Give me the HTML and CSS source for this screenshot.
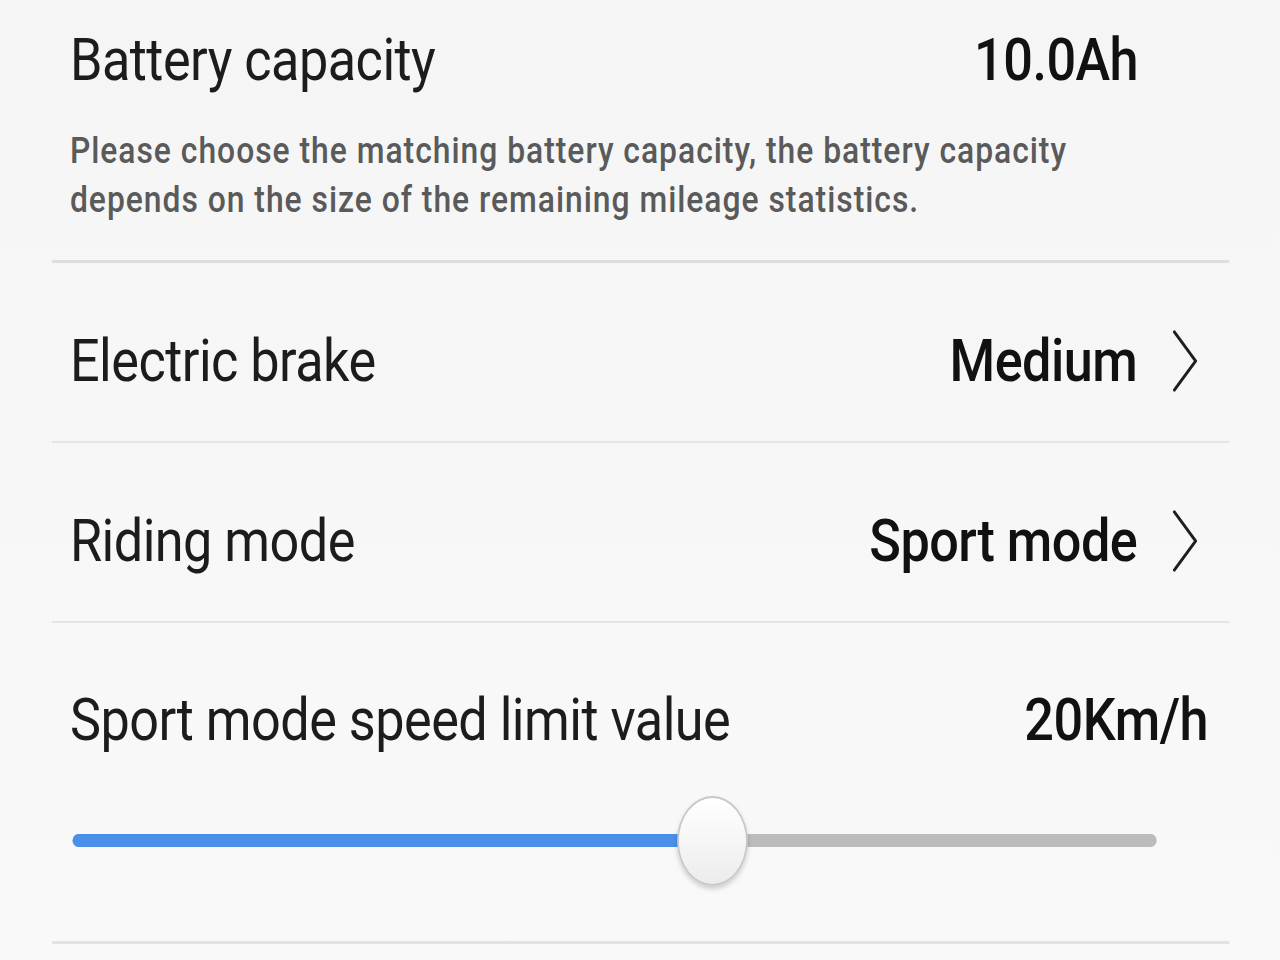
FILE: index.html
```html
<!DOCTYPE html>
<html>
<head>
<meta charset="utf-8" />
<title>Scooter settings</title>
<link rel="stylesheet" href="styles.css">
</head>
<body>
<div class="screen">
  <div class="item item_battery">
    <div class="item_head">
      <span class="item_title">Battery capacity</span>
      <span class="item_value">10.0Ah</span>
    </div>
    <p class="item_desc">Please choose the matching battery capacity, the battery capacity depends on the size of the remaining mileage statistics.</p>
  </div>
  <div class="item item_link">
    <div class="item_head">
      <span class="item_title">Electric brake</span>
      <span class="item_right">
        <span class="item_value">Medium</span>
        <svg class="chevron" width="30" height="62" viewBox="0 0 30 62"><path d="M3 2 L27 31 L3 60" fill="none" stroke="#1e1e1e" stroke-width="3.2" stroke-linecap="round" stroke-linejoin="round"/></svg>
      </span>
    </div>
  </div>
  <div class="item item_link">
    <div class="item_head">
      <span class="item_title">Riding mode</span>
      <span class="item_right">
        <span class="item_value">Sport mode</span>
        <svg class="chevron" width="30" height="62" viewBox="0 0 30 62"><path d="M3 2 L27 31 L3 60" fill="none" stroke="#1e1e1e" stroke-width="3.2" stroke-linecap="round" stroke-linejoin="round"/></svg>
      </span>
    </div>
  </div>
  <div class="item item_speed">
    <div class="item_head">
      <span class="item_title">Sport mode speed limit value</span>
      <span class="item_value">20Km/h</span>
    </div>
    <div class="slider">
      <div class="slider_track">
        <div class="slider_fill" style="width: 59%"></div>
        <div class="slider_thumb" style="left: 59%"></div>
      </div>
    </div>
  </div>
</div>
</body>
</html>
```

FILE: styles.css
```css
html, body {
margin: 0;
padding: 0;
overflow: hidden;
background-color: #f7f7f7; }
.screen {
width: 1446px;
height: 960px;
transform: scaleX(0.885);
transform-origin: 0 0;
font-family: Roboto, "Liberation Sans", sans-serif;
background: linear-gradient(#f5f5f5, #f9f9f9); }
.item {
margin: 0 57px 0 59px;
padding: 0 35px 0 20px;
border-bottom: 2px solid #e4e4e4; }
.item_head {
display: flex;
justify-content: space-between;
align-items: center;
height: 71px; }
.item_title {
font-size: 59px;
line-height: 71px;
color: #1c1c1c;
letter-spacing: -0.6px; }
.item_value {
font-size: 59px;
line-height: 71px;
font-weight: 500;
color: #111;
letter-spacing: -0.6px; }
.item_right {
display: flex;
align-items: center; }
.chevron {
margin-left: 39px; }
/* battery */
.item_battery {
padding-top: 24px;
padding-right: 103px;
padding-bottom: 35px;
border-bottom: 3px solid #dedede; }
.item_desc {
margin: 32px 0 0;
font-size: 36px;
font-weight: 500;
line-height: 49px;
color: #5a5a5a;
letter-spacing: 1.1px;
max-width: 1240px; }
/* rows that open a picker */
.item_link {
padding-top: 62px;
padding-bottom: 45px; }
/* speed limit with slider */
.item_speed {
padding-top: 61px;
padding-right: 24px;
padding-bottom: 56px;
border-bottom: 3px solid #e2e2e2; }
.slider {
padding: 41px 58px 0 3px; }
.slider_track {
position: relative;
height: 13px;
margin: 38px 0;
border-radius: 7px;
background-color: #bcbcbc; }
.slider_fill {
height: 13px;
border-radius: 7px 0 0 7px;
background-color: #4a90ea; }
.slider_thumb {
position: absolute;
top: -38px;
width: 76px;
height: 86px;
margin-left: -40px;
border: 2px solid #c8c8c8;
border-radius: 50%;
background: linear-gradient(#ffffff, #ececec);
box-shadow: 0 3px 6px rgba(0, 0, 0, 0.18); }
```
